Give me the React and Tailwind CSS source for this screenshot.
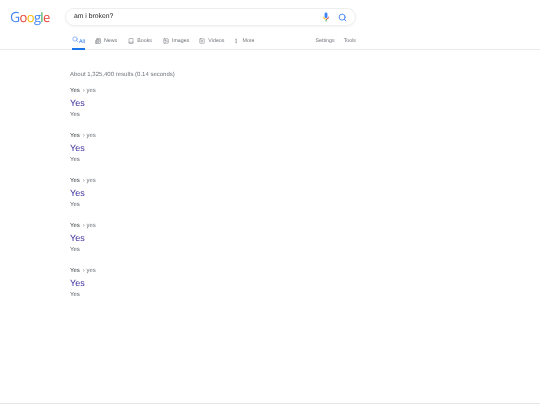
import { Search, Newspaper, Book, Image, SquarePlay, MoreVertical } from 'lucide-react';

const tabs = [
  { label: 'News', Icon: Newspaper, className: 'ml-[10px]' },
  { label: 'Books', Icon: Book, className: 'ml-[11px]' },
  { label: 'Images', Icon: Image, className: 'ml-[11px]' },
  { label: 'Videos', Icon: SquarePlay, className: 'ml-[10px]' },
  { label: 'More', Icon: MoreVertical, className: 'ml-[9px]' },
];

const MicIcon = () => (
  <svg viewBox="0 0 24 24" className="size-[10px]">
    <path fill="#4285f4" d="M12 15a3.5 3.5 0 0 0 3.5-3.5v-7a3.5 3.5 0 0 0-7 0v7A3.5 3.5 0 0 0 12 15z" />
    <path fill="#34a853" d="M11 18.9V23h2v-4.1a7 7 0 0 0 1.5-.4l-.8-1.8a5 5 0 0 1-1.7.3z" />
    <path fill="#fbbc05" d="M7 11.5H5a7 7 0 0 0 6 6.9v-2A5 5 0 0 1 7 11.5z" />
    <path fill="#ea4335" d="M17 11.5a5 5 0 0 1-4 4.9v2a7 7 0 0 0 6-6.9z" />
  </svg>
);

const Result = () => (
  <div className="mb-[12px]">
    <div className="flex h-[10px] items-center text-[6px] text-[#3c4043]">
      Yes<span className="ml-[3px] text-[#70757a]">› yes</span>
    </div>
    <div className="mt-[1px] flex h-[14px] items-center text-[9px] text-[#3a2d9c]">Yes</div>
    <div className="flex h-[8px] items-center text-[6px] text-[#5f6368]">Yes</div>
  </div>
);

const App = () => (
  <div className="flex h-[405px] w-[540px] flex-col overflow-hidden bg-white font-['Liberation_Sans',Arial,sans-serif] blur-[0.3px] [text-rendering:geometricPrecision]">
    <header className="h-[50px] shrink-0 border-b border-[#ebebeb]">
      <div className="flex h-[34px] items-start pl-[10px] pt-[8px]">
        <div className="w-[55px] font-['Open_Sans',sans-serif] text-[13px] leading-[18px] tracking-[-0.65px]">
          <span className="text-[14px] text-[#4285f4]">G</span>
          <span className="text-[#ea4335]">o</span>
          <span className="text-[#fbbc05]">o</span>
          <span className="text-[#4285f4]">g</span>
          <span className="text-[#34a853]">l</span>
          <span className="text-[#ea4335]">e</span>
        </div>
        <div className="flex h-[18px] w-[291px] items-center rounded-full border border-[#eeeeee] pl-[8px] pr-[8px] shadow-[0_1px_2px_rgba(32,33,36,0.05)]">
          <span className="mt-[1px] flex-1 text-[6.8px] text-[#222222]">am i broken?</span>
          <MicIcon />
          <Search className="ml-[7px] size-[9px] text-[#4285f4]" strokeWidth={2.5} />
        </div>
      </div>
      <nav className="flex h-[16px] items-start pl-[72px] text-[5.3px] text-[#70757a]">
        <div className="flex h-[16px] w-[13px] items-start border-b-2 border-[#1a73e8] pt-[3px] text-[#1a73e8]">
          <Search className="-mt-[1px] mr-[0.5px] size-[6.5px] text-[#4285f4]" strokeWidth={2} />
          <span className="mt-[1px] leading-[8px]">All</span>
        </div>
        {tabs.map(({ label, Icon, className }) => (
          <div key={label} className={`flex items-center gap-[3px] pt-[3px] leading-[8px] ${className}`}>
            <Icon className="size-[6px]" strokeWidth={2} />
            <span>{label}</span>
          </div>
        ))}
        <span className="ml-auto pt-[3px] leading-[8px]">Settings</span>
        <span className="ml-[9px] mr-[184px] pt-[3px] leading-[8px]">Tools</span>
      </nav>
    </header>
    <main className="flex-1 pl-[70px] pt-[20px]">
      <div className="mb-[6px] flex h-[10px] items-center text-[6px] text-[#70757a]">
        About 1,325,400 results (0.14 seconds)
      </div>
      {[0, 1, 2, 3, 4].map((n) => <Result key={n} />)}
    </main>
    <footer className="h-[2px] shrink-0 border-t border-[#e6e6e6]" />
  </div>
);

export default App;
